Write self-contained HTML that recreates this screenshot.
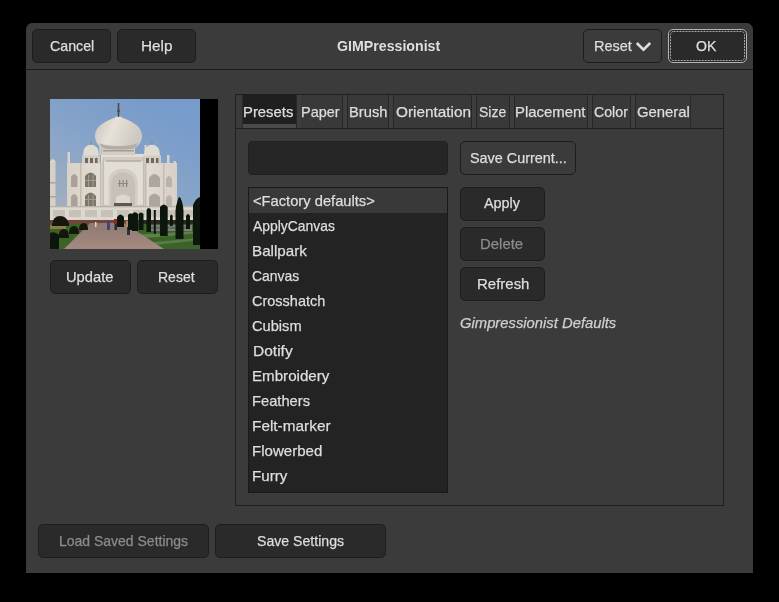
<!DOCTYPE html>
<html><head><meta charset="utf-8">
<style>
html,body{margin:0;padding:0;width:779px;height:602px;background:#000;overflow:hidden}
*{box-sizing:border-box}
body{font-family:"Liberation Sans",sans-serif;color:#dcdcdc;position:relative}
.a{position:absolute}
#dlg{left:26px;top:23px;width:727px;height:550px;background:#3b3b3b;border-radius:7px 7px 0 0;overflow:hidden}
#hdr{left:0;top:0;width:727px;height:47px;background:#3b3b3b;border-bottom:1px solid #1b1b1b}
.btn{position:absolute;background:#2a2a2a;border:1px solid #1d1d1d;border-radius:5px}
.flat{background:transparent}
.t{position:absolute;white-space:nowrap;font-size:15px;line-height:15px;color:#dedede;transform-origin:0 0;-webkit-text-stroke:0.25px currentColor}
.dis{color:#8c8c8c}
.tab{position:absolute;top:95px;height:33px;background:#393939}
.sep{position:absolute;top:95px;height:33px;width:6px;background:#3e3e3e;border-left:1px solid #272727;border-right:1px solid #272727}
</style></head><body>
<div id="dlg" class="a">
  <div id="hdr" class="a"></div>
</div>
<!-- header buttons -->
<div class="btn" style="left:32px;top:29px;width:79px;height:34px"></div>
<div class="btn" style="left:117px;top:29px;width:79px;height:34px"></div>
<div class="btn flat" style="left:583px;top:29px;width:79px;height:34px"></div>
<div class="btn" style="left:668px;top:29px;width:79px;height:34px;border-color:#b4b4b4"></div>
<svg class="a" style="left:670px;top:31px" width="75" height="30"><rect x="0.5" y="0.5" width="74" height="29" rx="3" fill="none" stroke="#a8a8a8" stroke-width="1" stroke-dasharray="2 1"/></svg>
<svg class="a" style="left:635px;top:41px" width="17" height="11" viewBox="0 0 17 11"><path d="M1.8 2 L8.5 8.6 L15.2 2" stroke="#dedede" stroke-width="2.6" fill="none"/></svg>

<span id="cancel" class="t" style="left:49.90px;top:38px;transform:scaleX(0.9476)">Cancel</span>
<span id="help" class="t" style="left:141.23px;top:38px;transform:scaleX(1.0207)">Help</span>
<span id="title" class="t" style="left:336.54px;top:38px;font-weight:bold;-webkit-text-stroke:0px;transform:scaleX(0.9450)">GIMPressionist</span>
<span id="hreset" class="t" style="left:593.50px;top:38px;transform:scaleX(0.9638)">Reset</span>
<span id="ok" class="t" style="left:696.27px;top:38px;transform:scaleX(0.9387)">OK</span>

<!-- preview -->
<div class="a" style="left:50px;top:99px;width:168px;height:150px;background:#000"></div>
<svg id="photo" class="a" style="left:50px;top:99px" width="150" height="150" viewBox="0 0 150 150">
<defs>
<linearGradient id="sky" x1="0.6" y1="0" x2="0.2" y2="0.75"><stop offset="0" stop-color="#779bca"/><stop offset="0.5" stop-color="#87a4c9"/><stop offset="0.85" stop-color="#98abc3"/><stop offset="1" stop-color="#a0aebf"/></linearGradient>
<linearGradient id="dome" x1="0" y1="0" x2="1" y2="0.3"><stop offset="0" stop-color="#c6c1b9"/><stop offset="0.45" stop-color="#e6e1d9"/><stop offset="1" stop-color="#cdc8c0"/></linearGradient>
<linearGradient id="bld" x1="0" y1="0" x2="1" y2="0"><stop offset="0" stop-color="#d8d1c6"/><stop offset="0.5" stop-color="#e8e3da"/><stop offset="1" stop-color="#d6d0c6"/></linearGradient>
<linearGradient id="path" x1="0" y1="0" x2="0" y2="1"><stop offset="0" stop-color="#8d7a72"/><stop offset="1" stop-color="#a58a80"/></linearGradient>
<filter id="bl" x="-5%" y="-5%" width="110%" height="110%"><feGaussianBlur stdDeviation="0.45"/></filter>
</defs>
<g filter="url(#bl)">
<rect width="150" height="150" fill="url(#sky)"/>
<!-- left minaret -->
<rect x="0" y="62" width="5.5" height="46" fill="#d6d0c6"/>
<path d="M0 63 Q2.5 57 5.5 63 Z" fill="#ddd8cf"/>
<rect x="0" y="83" width="6" height="1.5" fill="#aca498"/><rect x="0" y="97" width="6" height="1.5" fill="#aca498"/>
<!-- main building -->
<rect x="17" y="64" width="110" height="44" fill="url(#bld)"/>
<rect x="51" y="55" width="45" height="53" fill="#e3ded5"/>
<rect x="53" y="61" width="41" height="46" fill="none" stroke="#bdb5aa" stroke-width="1"/>
<!-- spires -->
<rect x="17.5" y="53" width="2.5" height="12" fill="#d8d2c8"/>
<rect x="117" y="56" width="2.5" height="9" fill="#d8d2c8"/>
<rect x="123.5" y="62" width="2.5" height="6" fill="#d8d2c8"/>
<rect x="49.5" y="46" width="2" height="10" fill="#d8d2c8"/>
<rect x="94.5" y="46" width="2" height="10" fill="#d8d2c8"/>
<!-- chattris -->
<path d="M33 57 Q33 46 41 45.5 Q49 46 49 57 Z" fill="#e0dbd2"/>
<rect x="40.5" y="42" width="1" height="4" fill="#8d8780"/>
<rect x="32" y="56.5" width="18" height="8" fill="#d2ccc2"/>
<rect x="35" y="59" width="3" height="5" fill="#6f675e"/><rect x="40" y="59" width="3" height="5" fill="#6f675e"/><rect x="45" y="59" width="2.5" height="5" fill="#6f675e"/>
<path d="M94 57 Q94 46 102 45.5 Q110 46 110 57 Z" fill="#e0dbd2"/>
<rect x="101.5" y="42" width="1" height="4" fill="#8d8780"/>
<rect x="93" y="56.5" width="18" height="8" fill="#d2ccc2"/>
<rect x="96" y="59" width="3" height="5" fill="#6f675e"/><rect x="101" y="59" width="3" height="5" fill="#6f675e"/><rect x="106" y="59" width="2.5" height="5" fill="#6f675e"/>
<!-- drum & dome -->
<rect x="52" y="48" width="33" height="8" fill="#d3cdc3"/>
<rect x="53" y="51" width="31" height="1.5" fill="#a39c92"/>
<path d="M68.5 16.5 C66 18.5 62 19.5 56 22.5 C49 26 45 31 45 37 C45 43 49 47 53 50 L84 50 C88 47 92 43 92 37 C92 31 88 26 81 22.5 C75 19.5 71 18.5 68.5 16.5 Z" fill="url(#dome)"/>
<path d="M49 44 C55 48 82 48 88 44 L85 49 C80 51 57 51 52 49 Z" fill="#b3ada4"/>
<rect x="67.7" y="4" width="1.6" height="14" fill="#4d4a45"/>
<circle cx="68.5" cy="12" r="1.4" fill="#4d4a45"/>
<!-- portal -->
<rect x="53.5" y="59" width="40" height="48" fill="none" stroke="#c4bdb2" stroke-width="1.2"/>
<path d="M56 62 L91 62" stroke="#b3ab9f" stroke-width="1.5"/>
<path d="M58.5 107 L58.5 83 Q59 71 73 69.5 Q87 71 87.5 83 L87.5 107 Z" fill="#d2ccc4"/>
<path d="M61 107 L61 85 Q62 74 73 73 Q84 74 85 85 L85 107 Z" fill="#c6c0b8"/>
<g fill="#8f887f"><rect x="69" y="81" width="1.2" height="7"/><rect x="72.5" y="81" width="1.2" height="7"/><rect x="76" y="81" width="1.2" height="7"/><rect x="68" y="84" width="10" height="1"/></g>
<path d="M66 107 L66 98 Q73 93 80 98 L80 107 Z" fill="#dcd7cf"/>
<rect x="64" y="104" width="18" height="3" fill="#5e5650"/>
<!-- wing arches -->
<path d="M35 88 L35 77 Q40.5 70 46 77 L46 88 Z" fill="#7d756b"/>
<path d="M35 107 L35 97 Q40.5 90 46 97 L46 107 Z" fill="#7d756b"/>
<g fill="#a59d92"><rect x="38" y="76" width="1" height="12"/><rect x="42.5" y="76" width="1" height="12"/><rect x="35" y="81" width="11" height="1"/><rect x="38" y="96" width="1" height="11"/><rect x="42.5" y="96" width="1" height="11"/><rect x="35" y="100" width="11" height="1"/></g>
<path d="M21 88 L21 78 Q24 72 27.5 78 L27.5 88 Z" fill="#aaa298"/>
<path d="M21 107 L21 98 Q24 92 27.5 98 L27.5 107 Z" fill="#aaa298"/>
<path d="M99 88 L99 79 Q104.5 71 110 79 L110 88 Z" fill="#aea69c"/>
<path d="M99 107 L99 98 Q104.5 91 110 98 L110 107 Z" fill="#aea69c"/>
<path d="M116 88 L116 80 Q119 74 122 80 L122 88 Z" fill="#bab2a8"/>
<path d="M116 107 L116 99 Q119 93 122 99 L122 107 Z" fill="#bab2a8"/>
<g fill="#c4bcb1"><rect x="30" y="64" width="1.5" height="44"/><rect x="50" y="64" width="1.5" height="44"/><rect x="95" y="64" width="1.5" height="44"/><rect x="113" y="64" width="1.5" height="44"/></g>
<!-- plinth -->
<rect x="0" y="107" width="147" height="15" fill="#ddd8cf"/>
<rect x="0" y="107" width="147" height="1.3" fill="#b9b2a7"/>
<g fill="#c8c1b6"><rect x="3" y="111" width="12" height="7"/><rect x="19" y="111" width="12" height="7"/><rect x="35" y="111" width="12" height="7"/><rect x="51" y="111" width="12" height="7"/><rect x="67" y="111" width="12" height="7"/><rect x="83" y="111" width="12" height="7"/><rect x="99" y="111" width="12" height="7"/><rect x="115" y="111" width="12" height="7"/><rect x="131" y="111" width="12" height="7"/></g>
<rect x="0" y="121" width="150" height="5" fill="#6e4638"/>
<rect x="90" y="121" width="60" height="6" fill="#2c2a22"/>
<!-- ground -->
<rect x="0" y="125" width="150" height="25" fill="#3a6428"/>
<rect x="98" y="126" width="44" height="6" fill="#7d8078"/>
<rect x="100" y="127.5" width="40" height="2.5" fill="#5f6a6a"/>
<path d="M80 136 L150 132 L150 134 L86 140 Z" fill="#6e8a5e" opacity="0.7"/>
<path d="M92 144 L150 139 L150 141 L98 147 Z" fill="#6e8a5e" opacity="0.6"/>
<path d="M40 124 L74 124 L114 150 L14 150 Z" fill="url(#path)"/>
<!-- left garden -->
<rect x="0" y="126" width="16" height="4" fill="#8d7d40"/>
<path d="M2 126 Q3 117 10 117 Q17 117 19 125 L19 127 L2 127 Z" fill="#15190f"/>
<path d="M9 139 Q8 130 14 130 Q19 130 19 139 Z" fill="#121610"/>
<path d="M19 135 Q19 127 24 127 Q29 127 29 135 Z" fill="#131810"/>
<path d="M29 131 Q29 124 34 124 Q38 124 38 131 Z" fill="#141910"/>
<path d="M0 150 L0 134 Q5 132 9 136 L9 150 Z" fill="#101410"/>
<!-- people -->
<rect x="45" y="123" width="1.5" height="5" fill="#d8d4cc"/>
<rect x="57" y="122" width="3" height="9" fill="#4a3f80"/>
<rect x="64" y="120" width="3.5" height="5" fill="#8a2a24"/>
<rect x="64.5" y="125" width="2.5" height="6" fill="#2a2a30"/>
<rect x="76" y="122" width="5" height="6" fill="#b48a58"/>
<rect x="77" y="128" width="3" height="8" fill="#2c3240"/>
<!-- cypresses -->
<g fill="#0f140e">
<path d="M67 128 L67 118 Q70.5 113 74 118 L74 128 Z"/>
<path d="M78 131 L78 116 Q80.5 112.5 83 116 L83 131 Z"/>
<path d="M82 132 L82 115 Q85 111.5 88 115 L88 132 Z"/>
<path d="M88.5 131 L88.5 115 Q91 112 93.5 115 L93.5 131 Z"/>
<path d="M96.5 133 L96.5 111 Q98.8 107 101 111 L101 133 Z"/>
<rect x="103.8" y="111" width="2" height="24"/>
<path d="M110 137 L110 108 Q113.8 103 117.7 108 L117.7 137 Z"/>
<path d="M120 127 L120 117 Q121.3 114 122.7 117 L122.7 127 Z"/>
<path d="M125.5 140 L125.5 112 Q126 106 127.5 102 Q129 96 130.5 99 Q133 104 133.5 112 L133.5 140 Z"/>
<path d="M136 130 L136 117 Q138 113 140 117 L140 130 Z"/>
<path d="M143 146 L143 106 Q146 99 150 98 L150 146 Z"/>
</g>
</g>
</svg>
<div class="btn" style="left:50px;top:260px;width:81px;height:34px"></div>
<div class="btn" style="left:137px;top:260px;width:81px;height:34px"></div>
<span id="update" class="t" style="left:66.35px;top:269px;transform:scaleX(0.9808)">Update</span>
<span id="preset" class="t" style="left:158.47px;top:269px;transform:scaleX(0.9344)">Reset</span>

<!-- notebook -->
<div class="a" style="left:235px;top:94px;width:489px;height:412px;border:1px solid #1f1f1f"></div>
<div class="a" style="left:236px;top:95px;width:487px;height:33px;background:#3a3a3a"></div>
<div class="a" style="left:236px;top:128px;width:487px;height:1px;background:#1f1f1f"></div>
<div class="tab" style="left:243px;width:53px;background:#1f1f1f"></div>
<div class="a" style="left:243px;top:124px;width:53px;height:4px;background:#4a4a4a"></div>
<div class="sep" style="left:242px;width:1px;border:0;background:#2c2c2c"></div>

<div class="sep" style="left:296px"></div>
<div class="tab" style="left:301px;width:41px"></div>
<div class="sep" style="left:342px"></div>
<div class="tab" style="left:348px;width:41px"></div>
<div class="sep" style="left:388px"></div>
<div class="tab" style="left:394px;width:78px"></div>
<div class="sep" style="left:471px"></div>
<div class="tab" style="left:477px;width:33px"></div>
<div class="sep" style="left:509px"></div>
<div class="tab" style="left:515px;width:73px"></div>
<div class="sep" style="left:587px"></div>
<div class="tab" style="left:593px;width:38px"></div>
<div class="sep" style="left:630px"></div>
<div class="tab" style="left:636px;width:54px"></div>
<div class="a" style="left:690px;top:95px;width:1px;height:33px;background:#2c2c2c"></div>

<span id="t_presets" class="t" style="left:243.05px;top:104px;transform:scaleX(0.9902)">Presets</span>
<span id="t_paper" class="t" style="left:301.08px;top:104px;transform:scaleX(0.9630)">Paper</span>
<span id="t_brush" class="t" style="left:349.21px;top:104px;transform:scaleX(0.9808)">Brush</span>
<span id="t_orient" class="t" style="left:395.50px;top:104px;transform:scaleX(1.0211)">Orientation</span>
<span id="t_size" class="t" style="left:478.58px;top:104px;transform:scaleX(0.9337)">Size</span>
<span id="t_place" class="t" style="left:515.05px;top:104px;transform:scaleX(0.9931)">Placement</span>
<span id="t_color" class="t" style="left:593.50px;top:104px;transform:scaleX(0.9452)">Color</span>
<span id="t_general" class="t" style="left:637.05px;top:104px;transform:scaleX(0.9890)">General</span>

<!-- entry -->
<div class="a" style="left:248px;top:141px;width:200px;height:34px;background:#262626;border:1px solid #202020;border-radius:4px"></div>
<div class="btn flat" style="left:460px;top:141px;width:116px;height:34px"></div>
<span id="savecur" class="t" style="left:469.72px;top:150px;transform:scaleX(0.9603)">Save Current...</span>

<!-- list -->
<div class="a" style="left:248px;top:187px;width:200px;height:306px;background:#232323;border:1px solid #1a1a1a"></div>
<div class="a" style="left:249px;top:188px;width:198px;height:25px;background:#393939"></div>
<span id="l0" class="t" style="left:252.78px;top:193px;transform:scaleX(0.9805)">&lt;Factory defaults&gt;</span>
<span id="l1" class="t" style="left:252.94px;top:218px;transform:scaleX(0.9258)">ApplyCanvas</span>
<span id="l2" class="t" style="left:251.75px;top:243px;transform:scaleX(1.0122)">Ballpark</span>
<span id="l3" class="t" style="left:252.34px;top:268px;transform:scaleX(0.9278)">Canvas</span>
<span id="l4" class="t" style="left:252.29px;top:293px;transform:scaleX(0.9661)">Crosshatch</span>
<span id="l5" class="t" style="left:252.25px;top:318px;transform:scaleX(0.9749)">Cubism</span>
<span id="l6" class="t" style="left:252.54px;top:343px;transform:scaleX(1.0350)">Dotify</span>
<span id="l7" class="t" style="left:251.75px;top:368px;transform:scaleX(1.0089)">Embroidery</span>
<span id="l8" class="t" style="left:252.20px;top:393px;transform:scaleX(0.9808)">Feathers</span>
<span id="l9" class="t" style="left:251.64px;top:418px;transform:scaleX(1.0247)">Felt-marker</span>
<span id="l10" class="t" style="left:251.80px;top:443px;transform:scaleX(1.0045)">Flowerbed</span>
<span id="l11" class="t" style="left:251.75px;top:468px;transform:scaleX(1.0098)">Furry</span>

<div class="btn" style="left:460px;top:187px;width:85px;height:34px"></div>
<div class="btn" style="left:460px;top:227px;width:85px;height:34px"></div>
<div class="btn" style="left:460px;top:267px;width:85px;height:34px"></div>
<span id="apply" class="t" style="left:484.17px;top:195px;transform:scaleX(0.9587)">Apply</span>
<span id="delete" class="t dis" style="left:480.09px;top:236px;transform:scaleX(0.9953)">Delete</span>
<span id="refresh" class="t" style="left:476.64px;top:276px;transform:scaleX(0.9987)">Refresh</span>
<span id="gdef" class="t" style="left:460.30px;top:315px;font-style:italic;color:#d0d0d0;transform:scaleX(0.9866)">Gimpressionist Defaults</span>

<!-- bottom -->
<div class="btn" style="left:38px;top:524px;width:171px;height:34px"></div>
<div class="btn" style="left:215px;top:524px;width:171px;height:34px"></div>
<span id="load" class="t dis" style="left:58.69px;top:533px;transform:scaleX(0.9323)">Load Saved Settings</span>
<span id="save" class="t" style="left:256.66px;top:533px;transform:scaleX(0.9410)">Save Settings</span>
</body></html>
